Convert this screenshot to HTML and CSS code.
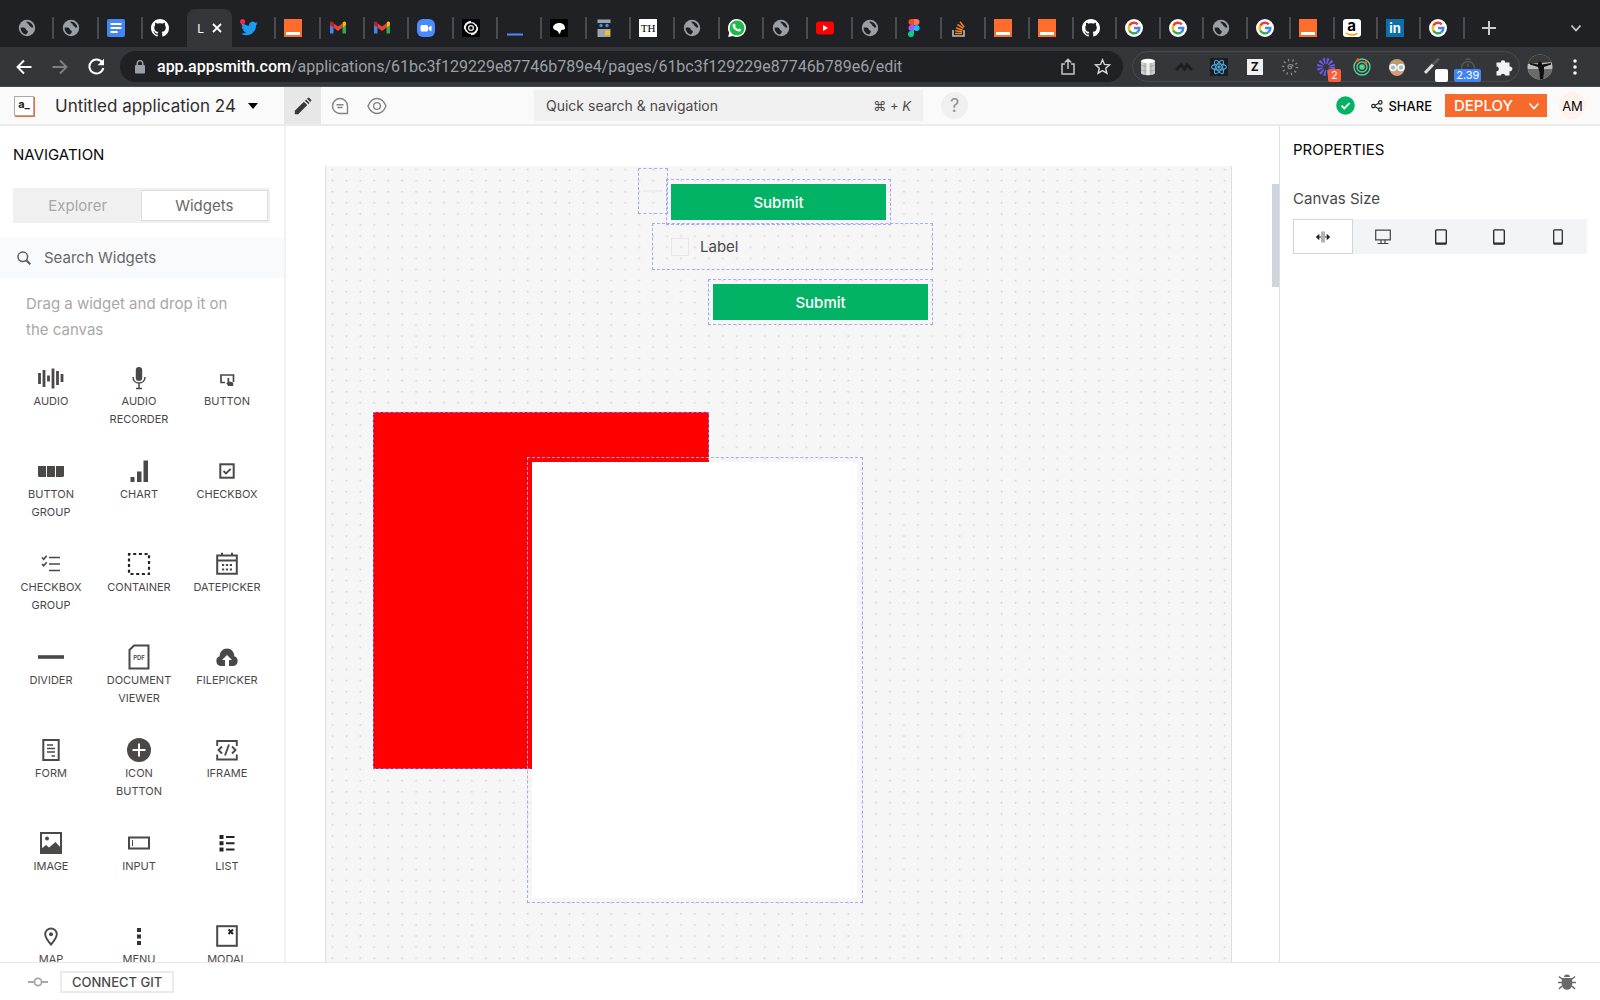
FILE: index.html
```html
<!DOCTYPE html>
<html lang="en">
<head>
    <meta charset="UTF-8">
    <meta name="viewport" content="width=device-width, initial-scale=1.0">
    <title>Untitled application 24</title>
    <link rel="stylesheet" href="styles.css">
</head>
<body>

    <!-- Shared icons -->
    <svg class="sprite" width="0" height="0" aria-hidden="true">
        <symbol id="globe" viewBox="0 0 18 18"><circle cx="9" cy="9" r="8.2" fill="#9aa0a6"/><path d="M2.6 8.5c2 .2 2.900-.4 4.300.6 1.300 1 .6 2.100 2.100 2.500 1.200.3 1 1.600.3 2.500-.5.800-1 1.300-1.500 1.400A6.600 6.600 0 0 1 2.600 8.500zM8.500 2.600c-.3 1.400.4 1.600 1.500 1.900 1.100.4.300 1.800 1.600 2.200 1.300.5 1.200 1.900 2.500 1.900h1.300A6.500 6.500 0 0 0 8.500 2.600z" fill="#202124"/></symbol>
        <symbol id="docs" viewBox="0 0 18 18"><rect width="18" height="18" rx="2" fill="#4285f4"/><path d="M3.500 5h11M3.500 9h11M3.500 13h7" stroke="#fff" stroke-width="2"/></symbol>
        <symbol id="github" viewBox="0 0 16 16"><path fill="#fff" d="M8 0C3.580 0 0 3.580 0 8c0 3.540 2.290 6.530 5.470 7.590.4.070.55-.17.55-.38 0-.19-.01-.82-.01-1.490-2.010.37-2.530-.49-2.690-.94-.09-.23-.48-.94-.82-1.130-.28-.15-.68-.52-.01-.53.63-.01 1.080.58 1.230.82.72 1.210 1.870.87 2.330.66.07-.52.28-.87.51-1.070-1.780-.2-3.640-.89-3.640-3.950 0-.87.31-1.590.82-2.150-.08-.2-.36-1.020.08-2.120 0 0 .67-.21 2.200.82.640-.18 1.320-.27 2-.27s1.360.09 2 .27c1.530-1.040 2.200-.82 2.200-.82.440 1.100.160 1.920.080 2.120.510.560.820 1.270.820 2.150 0 3.070-1.870 3.750-3.650 3.950.290.250.540.730.540 1.480 0 1.070-.010 1.930-.010 2.200 0 .210.150.460.550.380A8.010 8.010 0 0 0 16 8c0-4.420-3.580-8-8-8z"/></symbol>
        <symbol id="twitter" viewBox="0 0 18 18"><path fill="#1d9bf0" transform="translate(1 1) scale(.7)" d="M23.950 4.570a10 10 0 0 1-2.820.780 4.960 4.960 0 0 0 2.160-2.720c-.950.550-2 .960-3.130 1.180a4.920 4.920 0 0 0-8.380 4.480A13.900 13.900 0 0 1 1.640 3.160a4.920 4.920 0 0 0 1.520 6.570 4.900 4.900 0 0 1-2.230-.61v.06a4.920 4.920 0 0 0 3.950 4.830 5 5 0 0 1-2.210.080 4.940 4.940 0 0 0 4.600 3.420A9.870 9.870 0 0 1 0 19.540a14 14 0 0 0 7.550 2.210c9.050 0 14-7.500 14-13.980 0-.21 0-.42-.02-.63a9.940 9.940 0 0 0 2.460-2.550z"/><circle cx="2.600" cy="2.600" r="2.600" fill="#f4244e"/></symbol>
        <symbol id="smith" viewBox="0 0 18 18"><rect width="18" height="18" fill="#ff6d2d"/><rect x="2" y="13" width="14" height="3" fill="#fff"/></symbol>
        <symbol id="gmail" viewBox="0 0 18 18"><path d="M1 5v9.500h3.500V7.500z" fill="#4285f4"/><path d="M17 5v9.500h-3.500V7.500z" fill="#34a853"/><path d="M13.500 4.500v4L17 6V4c0-1.600-1.800-2-3-1z" fill="#fbbc04"/><path d="M4.500 4.200 9 7.600l4.500-3.400v4.300L9 12 4.500 8.500z" fill="#ea4335"/><path d="M4.500 8.500 1 6V4c0-1.600 1.800-2 3.500-.2z" fill="#c5221f"/></symbol>
        <symbol id="zoom" viewBox="0 0 18 18"><rect width="18" height="18" rx="6" fill="#4a8cff"/><rect x="3.500" y="6" width="7.500" height="6.500" rx="1.500" fill="#fff"/><path d="m11.500 8.500 3-2v6l-3-2z" fill="#fff"/></symbol>
        <symbol id="spiral" viewBox="0 0 18 18"><rect width="18" height="18" rx="1" fill="#000"/><g fill="none" stroke="#eee" stroke-width="1.300"><circle cx="9" cy="9" r="2.400"/><path d="M4.500 12.500A5.400 5.400 0 0 1 9 3.600c2.500 0 4 1.200 4.500 3M13.500 5.500A5.400 5.400 0 0 1 9 14.400c-2.500 0-4-1.200-4.500-3M2.500 10A6.700 6.700 0 0 1 9 2.400M15.500 8A6.700 6.700 0 0 1 9 15.600"/></g></symbol>
        <symbol id="line" viewBox="0 0 18 18"><path d="M1 15.500h16" stroke="#4a8cff" stroke-width="2"/></symbol>
        <symbol id="blob" viewBox="0 0 18 18"><rect width="18" height="18" fill="#000"/><path d="M3 8c1-3 4-4.500 7-4 3 .3 5 2 5 5 0 2-2 1.500-3.500 2-1 .5-.5 3-2 4-1-.5-1-3-3-3.500C4.500 11 3 10 3 8z" fill="#fff"/></symbol>
        <symbol id="robot" viewBox="0 0 18 18"><path d="M2.500.5h13V4h-13zM2.500 10h13v8h-13z" fill="#9aa7b0"/><circle cx="6" cy="6.500" r="1.700" fill="#4a90d9"/><circle cx="12" cy="6.500" r="1.700" fill="#4a90d9"/><rect x="10" y="11.500" width="5" height="4.500" fill="#fbbf24"/></symbol>
        <symbol id="whatsapp" viewBox="0 0 18 18"><path d="M9 0a9 9 0 0 1 0 18c-1.500 0-3-.4-4.200-1L.2 18l1-4.500A9 9 0 0 1 9 0z" fill="#fff"/><circle cx="9" cy="9" r="7.500" fill="#1fba4a"/><path d="M6 4.800c.8-.4 1.200.2 1.700 1.700-.1.600-.7.800-.5 1.300.7 1.300 1.500 2 2.900 2.600.5 0 .7-1 1.200-.9 1.800.6 2 .9 1.700 1.500-.5 1.700-2.200 1.800-4 1-2.500-1-4.500-3.300-4.500-5.500 0-.9.700-1.500 1.500-1.700z" fill="#fff"/></symbol>
        <symbol id="youtube" viewBox="0 0 18 18"><rect y="2.500" width="18" height="13" rx="3" fill="#f00"/><path d="M7 6v6l5-3z" fill="#fff"/></symbol>
        <symbol id="figma" viewBox="0 0 18 18"><path d="M9 0H6.500a3 3 0 0 0 0 6H9z" fill="#f24e1e"/><path d="M9 0h2.500a3 3 0 0 1 0 6H9z" fill="#ff7262"/><path d="M9 6H6.500a3 3 0 0 0 0 6H9z" fill="#a259ff"/><circle cx="11.600" cy="9" r="3" fill="#1abcfe"/><path d="M9 12H6.500a3 3 0 1 0 2.500 3z" fill="#0acf83"/></symbol>
        <symbol id="stack" viewBox="0 0 18 18"><path d="M3 11v6h11v-6" fill="none" stroke="#bcbbbb" stroke-width="1.600"/><path d="M5 14.500h7M5.200 11.800l6.900 1M6 8.800l6.500 2.500M7.500 5.500l5.800 3.800M10 2.800l4.200 5.200" stroke="#f48024" stroke-width="1.500"/></symbol>
        <symbol id="google" viewBox="0 0 18 18"><circle cx="9" cy="9" r="9" fill="#fff"/><g fill="none" stroke-width="2.400"><path d="M12.800 5.300A5.300 5.300 0 0 0 4.300 6.600" stroke="#ea4335"/><path d="M4.300 6.600a5.300 5.300 0 0 0 0 4.900" stroke="#fbbc05"/><path d="M4.300 11.500a5.300 5.300 0 0 0 8 1.700" stroke="#34a853"/><path d="M12.300 13.200A5.200 5.200 0 0 0 14.300 9H9" stroke="#4285f4"/></g></symbol>
        <symbol id="tablet" viewBox="0 0 16 16"><rect x="2.700" y=".8" width="10.600" height="14.400" rx="1" fill="none" stroke="#222" stroke-width="1.300"/><path d="M3 14.200h10" stroke="#222" stroke-width="1.400"/></symbol>
    </svg>

    <!-- Browser tabs -->
    <div class="tab-strip">
        <div class="tabs">
            <button class="tab" aria-label="Tab"><svg class="favicon"><use href="#globe"/></svg></button>
            <button class="tab" aria-label="Tab"><svg class="favicon"><use href="#globe"/></svg></button>
            <button class="tab" aria-label="Docs"><svg class="favicon"><use href="#docs"/></svg></button>
            <button class="tab" aria-label="GitHub"><svg class="favicon"><use href="#github"/></svg></button>
            <button class="tab active"><span class="tab-title">L</span><svg width="10" height="10" viewBox="0 0 10 10"><path d="m1 1 8 8M9 1 1 9" stroke="#fff" stroke-width="1.800"/></svg></button>
            <button class="tab" aria-label="Twitter"><svg class="favicon"><use href="#twitter"/></svg></button>
            <button class="tab" aria-label="Appsmith"><svg class="favicon"><use href="#smith"/></svg></button>
            <button class="tab" aria-label="Gmail"><svg class="favicon"><use href="#gmail"/></svg></button>
            <button class="tab" aria-label="Gmail"><svg class="favicon"><use href="#gmail"/></svg></button>
            <button class="tab" aria-label="Zoom"><svg class="favicon"><use href="#zoom"/></svg></button>
            <button class="tab" aria-label="Tab"><svg class="favicon"><use href="#spiral"/></svg></button>
            <button class="tab" aria-label="Tab"><svg class="favicon"><use href="#line"/></svg></button>
            <button class="tab" aria-label="Tab"><svg class="favicon"><use href="#blob"/></svg></button>
            <button class="tab" aria-label="Tab"><svg class="favicon"><use href="#robot"/></svg></button>
            <button class="tab"><span class="favicon th">TH</span></button>
            <button class="tab" aria-label="Tab"><svg class="favicon"><use href="#globe"/></svg></button>
            <button class="tab" aria-label="WhatsApp"><svg class="favicon"><use href="#whatsapp"/></svg></button>
            <button class="tab" aria-label="Tab"><svg class="favicon"><use href="#globe"/></svg></button>
            <button class="tab" aria-label="YouTube"><svg class="favicon"><use href="#youtube"/></svg></button>
            <button class="tab" aria-label="Tab"><svg class="favicon"><use href="#globe"/></svg></button>
            <button class="tab" aria-label="Figma"><svg class="favicon"><use href="#figma"/></svg></button>
            <button class="tab" aria-label="Stack Overflow"><svg class="favicon"><use href="#stack"/></svg></button>
            <button class="tab" aria-label="Appsmith"><svg class="favicon"><use href="#smith"/></svg></button>
            <button class="tab narrow" aria-label="Appsmith"><svg class="favicon"><use href="#smith"/></svg></button>
            <button class="tab narrow" aria-label="GitHub"><svg class="favicon"><use href="#github"/></svg></button>
            <button class="tab narrow" aria-label="Google"><svg class="favicon"><use href="#google"/></svg></button>
            <button class="tab narrow" aria-label="Google"><svg class="favicon"><use href="#google"/></svg></button>
            <button class="tab narrow" aria-label="Tab"><svg class="favicon"><use href="#globe"/></svg></button>
            <button class="tab narrow" aria-label="Google"><svg class="favicon"><use href="#google"/></svg></button>
            <button class="tab narrow" aria-label="Appsmith"><svg class="favicon"><use href="#smith"/></svg></button>
            <button class="tab narrow"><span class="favicon amazon">a<svg viewBox="0 0 18 18"><path d="M3 14c3.500 2.500 8.500 2.500 11.500.3" fill="none" stroke="#f90" stroke-width="1.500"/></svg></span></button>
            <button class="tab narrow"><span class="favicon linkedin">in</span></button>
            <button class="tab narrow" aria-label="Google"><svg class="favicon"><use href="#google"/></svg></button>
        </div>
        <button class="icon-btn" aria-label="New tab"><svg width="14" height="14" viewBox="0 0 14 14"><path d="M7 0v14M0 7h14" stroke="#ccc" stroke-width="2"/></svg></button>
        <button class="icon-btn tab-search" aria-label="Search tabs"><svg width="12" height="12" viewBox="0 0 12 12"><path d="m1.500 3.500 4.500 5 4.500-5" fill="none" stroke="#ccc" stroke-width="1.800"/></svg></button>
    </div>

    <!-- Browser toolbar -->
    <div class="toolbar">
        <button class="icon-btn nav" aria-label="Back"><svg width="16" height="16" viewBox="0 0 16 16"><path d="M15.500 8H1.500M8 1.500 1.500 8 8 14.500" fill="none" stroke="#fff" stroke-width="1.900"/></svg></button>
        <button class="icon-btn nav" aria-label="Forward"><svg width="16" height="16" viewBox="0 0 16 16"><path d="M.5 8h14M8 1.500 14.500 8 8 14.500" fill="none" stroke="#7d7f83" stroke-width="1.900"/></svg></button>
        <button class="icon-btn nav" aria-label="Reload"><svg width="17" height="17" viewBox="0 0 17 17"><path d="M14.500 5A7 7 0 1 0 15.300 10" fill="none" stroke="#fff" stroke-width="2"/><path d="M16 .8v6.400H9.600z" fill="#fff"/></svg></button>
        <div class="omnibox">
            <svg width="10" height="14" viewBox="0 0 10 14"><rect y="5" width="10" height="8.500" rx="1" fill="#9aa0a6"/><path d="M2.200 5.500V3.400a2.800 2.800 0 0 1 5.600 0v2.100" fill="none" stroke="#9aa0a6" stroke-width="1.500"/></svg>
            <span class="url"><b>app.appsmith.com</b>/applications/61bc3f129229e87746b789e4/pages/61bc3f129229e87746b789e6/edit</span>
            <button class="icon-btn" aria-label="Share page"><svg width="14" height="17" viewBox="0 0 14 17"><path d="M4 6H1v10h12V6h-3M7 11V1.500M3.800 4.500 7 1.400l3.200 3.100" fill="none" stroke="#c4c7cc" stroke-width="1.500"/></svg></button>
            <button class="icon-btn" aria-label="Bookmark"><svg width="17" height="17" viewBox="0 0 24 24"><path d="m12 2.500 2.800 6.600 7.200.6-5.500 4.700 1.700 7L12 17.700l-6.200 3.700 1.700-7L2 9.700l7.200-.6z" fill="none" stroke="#d5d7da" stroke-width="2"/></svg></button>
        </div>
        <div class="extensions">
            <svg class="ext" viewBox="0 0 18 18"><path d="M2 3v12c0 3 14 3 14 0V3z" fill="#ccc"/><path d="M2 7c2 2 12 2 14 0M2 11.500c2 2 12 2 14 0M6 4v13M12 4v13" fill="none" stroke="#aaa"/><path d="M9 4v13" stroke="#eee" stroke-width="3"/><ellipse cx="9" cy="3" rx="7" ry="2.200" fill="#fff"/></svg>
            <svg class="ext" viewBox="0 0 18 18"><path d="m1 12 5-5 3.500 4L12 7l5 5" fill="none" stroke="#1d1e21" stroke-width="3"/></svg>
            <svg class="ext" viewBox="0 0 18 18"><rect width="18" height="18" rx="1" fill="#1b1d21"/><g fill="none" stroke="#4aa8dc" stroke-width="1.100"><ellipse cx="9" cy="9" rx="7.500" ry="3"/><ellipse cx="9" cy="9" rx="7.500" ry="3" transform="rotate(60 9 9)"/><ellipse cx="9" cy="9" rx="7.500" ry="3" transform="rotate(120 9 9)"/></g><circle cx="9" cy="9" r="1.700" fill="#4aa8dc"/></svg>
            <span class="ext zed">Z</span>
            <svg class="ext" viewBox="0 0 18 18"><circle cx="9" cy="9" r="7" fill="none" stroke="#8b8d91" stroke-width="2.500" stroke-dasharray="1.200 3.200"/><path d="M9 9c0-1 1.600-1 1.600.4 0 1.800-3.600 2-3.600-.6 0-2.800 4.500-3.200 5.300-.3" fill="none" stroke="#8b8d91" stroke-width="1.200"/></svg>
            <span class="ext">
                <svg viewBox="0 0 18 18"><circle cx="9" cy="9" r="6" fill="none" stroke="#6c5ce7" stroke-width="6" stroke-dasharray="1.700 1.441"/></svg>
                <span class="badge red">2</span>
            </span>
            <svg class="ext" viewBox="0 0 18 18"><g fill="none" stroke="#4cd596" stroke-width="1.400"><circle cx="9" cy="9" r="8"/><circle cx="9" cy="9" r="5"/></g><circle cx="9" cy="9" r="2.800" fill="#4cd596"/><circle cx="5" cy="2" r="1.700" fill="#ff5a1f"/><circle cx="12.500" cy="5" r="1.700" fill="#ff5a1f"/></svg>
            <svg class="ext" viewBox="0 0 18 18"><circle cx="9" cy="9" r="8" fill="#c19a6b"/><path d="M2 11h14a7 7 0 0 1-14 0z" fill="#d99b7c"/><g fill="#8cc4d8" stroke="#fff" stroke-width="1.500"><circle cx="5" cy="9.500" r="3"/><circle cx="13" cy="9.500" r="3"/></g></svg>
            <span class="ext">
                <svg viewBox="0 0 18 18"><path d="M1 15 9 6.500" stroke="#ddd" stroke-width="3"/><path d="m9 6.500 6-6" stroke="#555" stroke-width="3"/></svg>
                <span class="badge blank"></span>
            </span>
            <span class="ext">
                <svg viewBox="0 0 18 18"><circle cx="9" cy="10" r="6.500" fill="none" stroke="#55575b" stroke-width="1.500"/><path d="M6.500 1.200h5M9 5.500V9" stroke="#55575b" stroke-width="1.500"/></svg>
                <span class="badge blue">2.39</span>
            </span>
            <svg class="ext" viewBox="0 0 18 18"><path d="M1.500 4.500h4.200a2.300 2.300 0 1 1 4.600 0h4.200v4a2.400 2.400 0 1 1 0 4.700v4.300h-4.300a2.300 2.300 0 0 0-4.500 0H1.500v-4.300a2.300 2.300 0 0 0 0-4.600z" fill="#f1f3f4"/></svg>
        </div>
        <button class="icon-btn" aria-label="Profile"><svg width="26" height="26" viewBox="0 0 26 26"><defs><clipPath id="round"><circle cx="13" cy="13" r="12.500"/></clipPath></defs><g clip-path="url(#round)"><path d="M0 0h26v26H0z" fill="#bdbdbd"/><path d="M0 0h26v8l-26 2z" fill="#3a3a3a"/><path d="M0 15h26v11H0z" fill="#6b6b6b"/><path d="m3 9 8 1.500q0-3 2-3t2 3L24 9v1.500l-7 2.500v5l-1 8h-3l-.5-8-1.500-5-8-2.500z" fill="#111"/></g></svg></button>
        <button class="icon-btn menu-dots" aria-label="Menu"><svg width="4" height="16" viewBox="0 0 4 16"><g fill="#f1f3f4"><circle cx="2" cy="2" r="1.800"/><circle cx="2" cy="8" r="1.800"/><circle cx="2" cy="14" r="1.800"/></g></svg></button>
    </div>

    <!-- Editor header -->
    <header class="header">
        <a class="logo" href="#" aria-label="Appsmith home"><span>a_</span></a>
        <button class="app-name">Untitled application 24 <svg width="10" height="6" viewBox="0 0 10 6"><path d="M0 0h10L5 6z" fill="#000"/></svg></button>
        <div class="modes">
            <button class="mode active" aria-label="Edit"><svg width="18" height="18" viewBox="0 0 18 18"><path d="M.8 13.800V17.200h3.400L13.300 8.100 9.900 4.700zM10.900 3.700l1.200-1.200 3.400 3.400-1.200 1.200zM13 1.700 13.900.9q.7-.6 1.400 0l1.800 1.800q.6.700 0 1.400L16.300 5z" fill="#393939"/></svg></button>
            <button class="mode" aria-label="Comments"><svg width="18" height="18" viewBox="0 0 18 18"><path d="M16.500 16.500H9A7.500 7.500 0 1 1 16.500 9zM5.500 7.700h7M6.500 10.500h5" fill="none" stroke="#858282" stroke-width="1.400"/></svg></button>
            <button class="mode" aria-label="Preview"><svg width="20" height="18" viewBox="0 0 20 18"><path d="M10 1.500c4 0 7 2.500 9 7.500-2 5-5 7.500-9 7.500S3 14 1 9c2-5 5-7.500 9-7.500z" fill="none" stroke="#858282" stroke-width="1.400"/><circle cx="10" cy="9" r="3.400" fill="none" stroke="#858282" stroke-width="1.400"/></svg></button>
        </div>
        <button class="quick-search"><span>Quick search &amp; navigation</span><span class="shortcut">⌘ + <i>K</i></span></button>
        <button class="help">?</button>
        <div class="header-right">
            <svg width="19" height="19" viewBox="0 0 19 19"><circle cx="9.500" cy="9.500" r="9.300" fill="#03b365"/><path d="m5.500 9.600 2.800 2.800 5.200-5.300" fill="none" stroke="#fff" stroke-width="1.900"/></svg>
            <button class="share"><svg width="12" height="12" viewBox="0 0 12 12"><g fill="none" stroke="#222" stroke-width="1.200"><circle cx="2.400" cy="6" r="1.700"/><circle cx="9.300" cy="2.400" r="1.700"/><circle cx="9.300" cy="9.600" r="1.700"/><path d="m4 5.200 3.700-2M4 6.800l3.700 2"/></g></svg>SHARE</button>
            <button class="deploy">DEPLOY <svg width="12" height="12" viewBox="0 0 12 12"><path d="M1.500 3.500 6 8.500l4.500-5" fill="none" stroke="#fff" stroke-width="1.600"/></svg></button>
            <button class="user">AM</button>
        </div>
    </header>

    <main class="editor">
        <!-- Widgets sidebar -->
        <aside class="sidebar">
            <h2>NAVIGATION</h2>
            <div class="switch">
                <button>Explorer</button>
                <button class="selected">Widgets</button>
            </div>
            <label class="search">
                <svg width="14" height="14" viewBox="0 0 14 14"><circle cx="5.800" cy="5.800" r="4.800" fill="none" stroke="#5c5c5c" stroke-width="1.500"/><path d="m9.300 9.300 4 4" stroke="#5c5c5c" stroke-width="2"/></svg>
                <input type="text" placeholder="Search Widgets" aria-label="Search Widgets">
            </label>
            <p class="hint">Drag a widget and drop it on the canvas</p>
            <ul class="widgets">
                <li><svg viewBox="0 0 26 26"><path d="M1.500 8v11M6 5v17M10.500 10.500v6M15 3.500v20M19.500 6v14M24 9v8" stroke="#4b4848" stroke-width="2.800"/></svg>AUDIO</li>
                <li><svg viewBox="0 0 26 26"><rect x="9.800" y="2" width="6.400" height="14" rx="3.200" fill="#4b4848"/><path d="M7 12c0 8 12 8 12 0M13 18.500V23M10 23.500h6" fill="none" stroke="#4b4848" stroke-width="1.500"/></svg>AUDIO<br>RECORDER</li>
                <li><svg viewBox="0 0 26 26"><path d="M11 17.500H7V10h12.500v7" fill="none" stroke="#4b4848" stroke-width="1.700"/><path d="M13.500 13h1.700v3.500l4 1v3.500h-5l-2-3 1.300-.5z" fill="#4b4848"/></svg>BUTTON</li>
                <li><svg viewBox="0 0 26 26"><path d="M0 8h8v11H1.500Q0 19 0 17.500zM9 8h8v11H9zM18 8h8v9.500q0 1.500-1.500 1.500H18z" fill="#4b4848"/></svg>BUTTON<br>GROUP</li>
                <li><svg viewBox="0 0 26 26"><path d="M4.500 19h4v5h-4zM11 13.500h4.500V24H11zM17.500 2.500H22V24h-4.500z" fill="#4b4848"/></svg>CHART</li>
                <li><svg viewBox="0 0 26 26"><rect x="6.300" y="6.300" width="13.400" height="13.400" fill="none" stroke="#4b4848" stroke-width="2"/><path d="m9.500 13 2.500 2.500 4.700-4.700" fill="none" stroke="#4b4848" stroke-width="1.800"/></svg>CHECKBOX</li>
                <li><svg viewBox="0 0 26 26"><path d="M11 6.500h11M11 13h11M11 19.500h11M4 6.500l1.700 1.700 3-3.400M4 13l1.700 1.700 3-3.400" fill="none" stroke="#4b4848" stroke-width="1.700"/></svg>CHECKBOX<br>GROUP</li>
                <li><svg viewBox="0 0 26 26"><rect x="3" y="3" width="20" height="20" fill="none" stroke="#222" stroke-width="2.200" stroke-dasharray="3 2.700" stroke-dashoffset="1.500"/></svg>CONTAINER</li>
                <li><svg viewBox="0 0 26 26"><path d="M3.200 4.500h19.600v18.300H3.200zM3.200 9.500h19.600M8 1.800v3M18 1.800v3" fill="none" stroke="#4b4848" stroke-width="2"/><path d="M8 14h10M8 18.500h10" stroke="#4b4848" stroke-width="2.200" stroke-dasharray="2.200 1.700"/></svg>DATEPICKER</li>
                <li><svg viewBox="0 0 26 26"><path d="M0 13h26" stroke="#4b4848" stroke-width="3.600"/></svg>DIVIDER</li>
                <li><svg viewBox="0 0 26 26"><path d="M8 1.500h14.500v23h-19V6z" fill="none" stroke="#4b4848" stroke-width="2"/><text x="13" y="16" class="pdf">PDF</text></svg>DOCUMENT<br>VIEWER</li>
                <li><svg viewBox="0 0 26 26"><path d="M11 22H7a5 5 0 0 1-1.300-9.700C5.500 8 9 4.500 13 4.500s7.500 3.500 7.300 7.800A5 5 0 0 1 19 22h-4v-6h3l-5-5-5 5h3z" fill="#4b4848"/></svg>FILEPICKER</li>
                <li><svg viewBox="0 0 26 26"><rect x="5.300" y="3" width="15.400" height="20" fill="none" stroke="#4b4848" stroke-width="2"/><path d="M9 8h6M9 11.500h8M9 15h8M13.500 19h3.500" stroke="#4b4848" stroke-width="1.700"/></svg>FORM</li>
                <li><svg viewBox="0 0 26 26"><circle cx="13" cy="13" r="12" fill="#4b4848"/><path d="M13 6.500v13M6.500 13h13" stroke="#fff" stroke-width="2"/></svg>ICON<br>BUTTON</li>
                <li><svg viewBox="0 0 26 26"><path d="M3.200 9V4h19.600v5M3.200 17.500v5h19.600v-5M8 9.500 4.500 13 8 16.500M18 9.500l3.500 3.500-3.500 3.500M15 7.500l-4 11" fill="none" stroke="#4b4848" stroke-width="1.900"/></svg>IFRAME</li>
                <li><svg viewBox="0 0 26 26"><rect x="3" y="3" width="20" height="20" fill="none" stroke="#4b4848" stroke-width="2"/><circle cx="9" cy="8.500" r="2" fill="#4b4848"/><path d="m3 19 5-4 3 2.500L17.500 12l5.500 6v5H3z" fill="#4b4848"/></svg>IMAGE</li>
                <li><svg viewBox="0 0 26 26"><rect x="3" y="7.500" width="20" height="11" fill="none" stroke="#4b4848" stroke-width="2"/><path d="M6.500 10v6" stroke="#4b4848"/></svg>INPUT</li>
                <li><svg viewBox="0 0 26 26"><path d="M5.500 5h4v4h-4zM5.500 11.200h4v4h-4zM5.500 17.500h4v4h-4zM12 6h8.500v2H12zM12 12.200h8.500v2H12zM12 18.500h8.500v2H12z" fill="#222"/></svg>LIST</li>
                <li><svg viewBox="0 0 26 26"><path d="M13 21.500C9 17 7.200 14.500 7.200 11.300a5.800 5.800 0 0 1 11.600 0c0 3.200-1.800 5.700-5.800 10.200z" fill="none" stroke="#4b4848" stroke-width="1.900"/><circle cx="13" cy="11.300" r="2" fill="#4b4848"/></svg>MAP</li>
                <li><svg viewBox="0 0 26 26"><path d="M11 5h4v4h-4zM11 11.500h4v4h-4zM11 18h4v4h-4z" fill="#333"/></svg>MENU</li>
                <li><svg viewBox="0 0 26 26"><rect x="3.200" y="3.200" width="19.600" height="19.600" fill="none" stroke="#4b4848" stroke-width="2"/><path d="m14.500 6.500 4.500 4.500M19 6.500 14.500 11" stroke="#222" stroke-width="2"/></svg>MODAL</li>
            </ul>
        </aside>

        <!-- Canvas -->
        <section class="workspace">
            <div class="canvas">
                <svg class="dots" width="100%" height="100%">
                    <pattern id="dot" width="13.940" height="11.110" patternUnits="userSpaceOnUse"><circle cx="6.500" cy="3.500" r="1" fill="#d4d4d4"/></pattern>
                    <rect width="100%" height="100%" fill="url(#dot)"/>
                </svg>
                <div class="box divider"><hr></div>
                <div class="box submit-one"><button class="submit">Submit</button></div>
                <div class="box check"><label><input type="checkbox">Label</label></div>
                <div class="box submit-two"><button class="submit">Submit</button></div>
                <div class="box red-container"></div>
                <div class="box white-container"><div class="fill"></div></div>
            </div>
            <div class="scroll-thumb"></div>
        </section>

        <!-- Property pane -->
        <aside class="properties">
            <h2>PROPERTIES</h2>
            <h3>Canvas Size</h3>
            <div class="sizes">
                <button class="selected" aria-label="Fluid"><svg width="16" height="16" viewBox="0 0 16 16"><path d="M7 2.500v11M9 2.500v11" stroke="#666" stroke-width="1"/><path d="M.8 8 4.300 4.800v6.400zM15.200 8l-3.500-3.200v6.400zM4 7.500h2v1H4zM10 7.500h2v1h-2z" fill="#222"/></svg></button>
                <button aria-label="Desktop"><svg width="16" height="16" viewBox="0 0 16 16"><path d="M.7 1.200h14.600v9.600H.7zM6 11v3M10 11v3M2.500 14.500h11" fill="none" stroke="#444" stroke-width="1.200"/></svg></button>
                <button aria-label="Tablet large"><svg width="16" height="16"><use href="#tablet"/></svg></button>
                <button aria-label="Tablet"><svg width="16" height="16"><use href="#tablet"/></svg></button>
                <button aria-label="Mobile"><svg width="16" height="16" viewBox="0 0 16 16"><rect x="3.700" y=".8" width="8.600" height="14.400" rx="1" fill="none" stroke="#222" stroke-width="1.200"/><path d="M4 14.200h8" stroke="#222" stroke-width="1.400"/></svg></button>
            </div>
        </aside>
    </main>

    <!-- Status bar -->
    <footer class="footer">
        <svg width="20" height="10" viewBox="0 0 20 10"><path d="M0 5h6M14 5h6" stroke="#a9a7a7" stroke-width="1.800"/><circle cx="10" cy="5" r="3.600" fill="none" stroke="#a9a7a7" stroke-width="1.800"/></svg>
        <button class="connect">CONNECT GIT</button>
        <button class="icon-btn debug" aria-label="Debugger"><svg width="18" height="18" viewBox="0 0 18 18"><path d="M3.800 5h10.400v6.500a5.200 5.200 0 0 1-10.400 0zM6 4q0-2.500 3-2.500T12 4z" fill="#6b6868"/><path d="M4 6 1 3.500M14 6l3-2.500M4 9.500H0M14 9.500h4M4 13l-3 3M14 13l3 3" stroke="#6b6868" stroke-width="1.500"/></svg></button>
    </footer>

</body>
</html>
```
FILE: styles.css
```css
* {
    box-sizing: border-box;
}
body {
    margin: 0;
    height: 100vh;
    display: flex;
    flex-direction: column;
    overflow: hidden;
    font-family: Inter, "Noto Sans", sans-serif;
    font-size: 16px;
    color: #4b4848;
    background: #fff;
}
button {
    font: inherit;
    color: inherit;
    background: none;
    border: none;
    padding: 0;
    cursor: pointer;
}
svg {
    display: block;
    flex-shrink: 0;
}
h2, h3 {
    margin: 0;
    font-size: 15px;
    font-weight: 400;
    line-height: 20px;
}
h2 {
    color: #090707;
}
.sprite {
    position: absolute;
}

/* Browser tabs */
.tab-strip {
    display: flex;
    align-items: flex-end;
    height: 47px;
    flex-shrink: 0;
    padding: 0 18px 0 10px;
    background: #202124;
}
.tabs {
    display: flex;
    flex: 1;
}
.tab {
    flex: 41 1 0;
    min-width: 0;
    height: 38px;
    display: flex;
    align-items: center;
    padding-left: 8px;
    background: linear-gradient(#4b4c4f, #4b4c4f) right center / 2px 22px no-repeat;
}
.tab.narrow {
    flex-grow: 40;
}
.tab.active {
    justify-content: center;
    gap: 8px;
    padding: 0 4px;
    color: #fff;
    background: #35363a;
    border-radius: 8px 8px 0 0;
}
.tab:has(+ .active) {
    background: none;
}
.tab-title {
    font-size: 12px;
}
.favicon {
    width: 18px;
    height: 18px;
    position: relative;
    display: flex;
    align-items: center;
    justify-content: center;
}
.th {
    background: #fff;
    color: #000;
    font: 11px "Liberation Serif", serif;
}
.amazon {
    background: #fff;
    border-radius: 3px;
    color: #000;
    font-size: 15px;
    font-weight: 700;
    line-height: 12px;
    padding-bottom: 4px;
}
.amazon svg {
    position: absolute;
    inset: 0;
}
.linkedin {
    background: #0e6fae;
    color: #fff;
    font-size: 13px;
    font-weight: 700;
}
.icon-btn {
    display: flex;
    align-items: center;
    justify-content: center;
    height: 38px;
}
.tab-strip .icon-btn {
    margin-left: 17px;
}
.tab-strip .tab-search {
    margin-left: 74px;
}

/* Browser toolbar */
.toolbar {
    display: flex;
    align-items: center;
    height: 40px;
    flex-shrink: 0;
    padding: 0 23px 0 6px;
    background: #35363a;
    border-bottom: 1px solid #4a4b4f;
}
.nav {
    width: 36px;
}
.omnibox {
    flex: 1;
    display: flex;
    align-items: center;
    height: 31px;
    margin-left: 6px;
    padding: 0 12px 0 15px;
    border-radius: 16px;
    background: #202124;
}
.url {
    flex: 1;
    margin-left: 12px;
    color: #9aa0a6;
    font-family: Roboto, sans-serif;
    font-size: 16px;
    white-space: nowrap;
}
.url b {
    color: #fff;
    font-weight: 500;
}
.omnibox .icon-btn {
    margin-left: 19px;
}
.extensions {
    display: flex;
    align-items: center;
    justify-content: space-between;
    width: 388px;
    height: 31px;
    margin: 0 7px 0 9px;
    padding: 0 6px;
    border: 1px solid #4a4b4f;
    border-radius: 16px;
}
.ext {
    position: relative;
    width: 18px;
    height: 18px;
}
.zed {
    width: 16px;
    height: 16px;
    margin: 0 1px;
    background: #f1f1f1;
    color: #111;
    font-size: 12px;
    font-weight: 700;
    line-height: 16px;
    text-align: center;
}
.badge {
    position: absolute;
    top: 11px;
    left: 11px;
    min-width: 13px;
    height: 13px;
    border-radius: 2px;
    color: #fff;
    font-size: 11px;
    line-height: 13px;
    text-align: center;
}
.red {
    background: #ff5c39;
}
.blank {
    background: #fff;
}
.blue {
    left: -5px;
    width: 27px;
    background: #4285f4;
}
.menu-dots {
    margin-left: 20px;
}

/* Editor header */
.header {
    display: flex;
    align-items: center;
    height: 39px;
    flex-shrink: 0;
    background: #fafafa;
    border-bottom: 2px solid #ebebeb;
}
.logo {
    width: 20px;
    height: 20px;
    margin-left: 14px;
    border: 1px solid #aaa;
    background: #fff;
    box-shadow: 1px 1px 0 #f86a2b;
    color: #222;
    font-size: 11px;
    font-weight: 700;
    line-height: 15px;
    text-align: center;
    text-decoration: none;
}
.app-name {
    display: flex;
    align-items: center;
    justify-content: space-between;
    width: 203px;
    margin: 0 26px 0 21px;
    color: #302d2d;
    font-size: 17px;
    white-space: nowrap;
}
.modes {
    display: flex;
    align-self: stretch;
}
.mode {
    width: 37px;
    display: flex;
    align-items: center;
    justify-content: center;
}
.mode.active {
    background: #e7e7e7;
}
.quick-search {
    display: flex;
    flex: 0 1 389px;
    align-items: center;
    justify-content: space-between;
    height: 31px;
    margin-left: 139px;
    padding: 0 12px;
    background: #f0f0f0;
    color: #4b4848;
    font-size: 14px;
}
.shortcut {
    font-size: 13px;
}
.help {
    width: 27px;
    height: 27px;
    margin-left: 18px;
    border-radius: 50%;
    background: #f0f0f0;
    color: #939090;
    font-size: 18px;
}
.header-right {
    display: flex;
    align-items: center;
    margin: 0 14px 0 auto;
    color: #090707;
    font-size: 13px;
}
.share {
    display: flex;
    align-items: center;
    gap: 5px;
    margin: 0 13px 0 16px;
    font-weight: 500;
}
.deploy {
    display: flex;
    align-items: center;
    justify-content: space-between;
    width: 102px;
    height: 23px;
    padding: 0 7px 0 9px;
    background: #f86a2b;
    color: #fff;
    font-size: 15px;
    font-weight: 500;
}
.user {
    width: 27px;
    height: 27px;
    margin-left: 12px;
    border-radius: 50%;
    background: #fff2eb;
}

/* Editor body */
.editor {
    display: flex;
    flex: 1;
    min-height: 0;
}
.sidebar {
    display: flex;
    flex-direction: column;
    width: 286px;
    flex-shrink: 0;
    border-right: 2px solid #f0effa;
    overflow: hidden;
}
.sidebar h2 {
    margin: 19px 13px 23px;
}
.switch {
    display: flex;
    height: 35px;
    flex-shrink: 0;
    margin: 0 14px 14px 13px;
    padding: 2px;
    background: #f0f0f0;
    color: #a9a7a7;
}
.switch button {
    flex: 1;
    font-size: 15px;
}
.switch .selected {
    background: #fff;
    border: 1px solid #dcdcdc;
    color: #6a6767;
}
.search {
    display: flex;
    align-items: center;
    gap: 13px;
    height: 41px;
    flex-shrink: 0;
    padding: 0 17px;
    background: #f8fafc;
}
.search input {
    flex: 1;
    min-width: 0;
    padding: 0;
    border: none;
    outline: none;
    background: none;
    font: inherit;
    font-size: 15px;
}
.search input::placeholder {
    color: #6a6767;
}
.hint {
    margin: 13px 48px 22px 26px;
    color: #a9a7a7;
    font-size: 15px;
    line-height: 26px;
}
.widgets {
    display: grid;
    grid-template-columns: repeat(3, 1fr);
    grid-auto-rows: 93px;
    flex: 1;
    min-height: 0;
    margin: 0;
    padding: 0 13px 0 7px;
    overflow: hidden;
    list-style: none;
    color: #4b4848;
    font-size: 11px;
    line-height: 18px;
    text-align: center;
}
.widgets svg {
    width: 26px;
    height: 26px;
    margin: 0 auto 1px;
}
.pdf {
    fill: #4b4848;
    font-size: 6px;
    font-weight: 600;
    text-anchor: middle;
}

/* Canvas */
.workspace {
    position: relative;
    display: flex;
    flex: 1;
    padding: 40px 47px 0 39px;
}
.canvas {
    position: relative;
    flex: 1;
    overflow: hidden;
    background: #f6f6f6;
    border: solid #dedede;
    border-width: 0 1px;
}
.dots {
    position: absolute;
    inset: 0;
}
.box {
    position: absolute;
    border: 1px dashed #a9abf5;
}
.divider {
    left: 312px;
    top: 2px;
    width: 30px;
    height: 46px;
}
.divider hr {
    margin: 21px 4px 0;
    border: none;
    border-top: 2px solid #ececec;
}
.submit-one {
    left: 340px;
    top: 13px;
    width: 225px;
    height: 46px;
}
.check {
    left: 326px;
    top: 57px;
    width: 281px;
    height: 47px;
}
.check label {
    display: flex;
    align-items: center;
    gap: 11px;
    height: 100%;
    padding-left: 18px;
    font-size: 15px;
}
.check input {
    appearance: none;
    width: 18px;
    height: 18px;
    margin: 0;
    border: 1px solid #e7e7e7;
}
.submit-two {
    left: 382px;
    top: 113px;
    width: 225px;
    height: 46px;
}
.submit {
    display: block;
    width: calc(100% - 8px);
    height: 36px;
    margin: 4px;
    background: #03b365;
    color: #fff;
    font-size: 15px;
    font-weight: 500;
}
.red-container {
    left: 47px;
    top: 246px;
    width: 336px;
    height: 357px;
    background: #f00;
    border-color: #8a6cf0;
}
.white-container {
    left: 201px;
    top: 291px;
    width: 336px;
    height: 446px;
    padding: 4px 5px 4px 4px;
}
.fill {
    height: 100%;
    background: #fff;
}
.scroll-thumb {
    position: absolute;
    top: 58px;
    right: 0;
    width: 7px;
    height: 103px;
    background: #d0d4dc;
}

/* Property pane */
.properties {
    width: 321px;
    flex-shrink: 0;
    padding: 14px 13px 0;
    border-left: 1px solid #dedede;
}
.properties h3 {
    margin: 29px 0 10px;
}
.sizes {
    display: flex;
    height: 35px;
    background: #f3f4f6;
}
.sizes button {
    flex: 1;
    display: flex;
    align-items: center;
    justify-content: center;
}
.sizes .selected {
    background: #fff;
    border: 1px solid #d4d4d8;
}

/* Status bar */
.footer {
    display: flex;
    align-items: center;
    height: 38px;
    flex-shrink: 0;
    padding: 0 24px 0 28px;
    border-top: 1px solid #e7e7e7;
}
.connect {
    height: 22px;
    margin-left: 12px;
    padding: 0 10px;
    border: 2px solid #ebebeb;
    font-size: 13px;
    font-weight: 500;
    line-height: 18px;
}
.debug {
    margin-left: auto;
}
```
